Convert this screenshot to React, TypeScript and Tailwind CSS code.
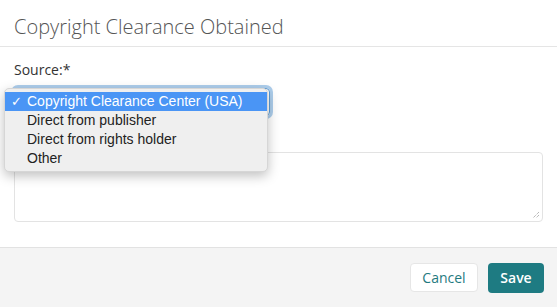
const options = [
  "Copyright Clearance Center (USA)",
  "Direct from publisher",
  "Direct from rights holder",
  "Other",
];

const App = () => {
  return (
    <div className="relative h-[307px] w-[557px] overflow-hidden bg-white font-['Open_Sans',sans-serif]">
      <div className="flex h-[47px] items-center border-b border-[#e5e5e5] px-[14px] pt-[7px]">
        <h1 className="text-[20px] font-light text-[#555]">
          Copyright Clearance Obtained
        </h1>
      </div>

      <div className="flex h-[200px] flex-col px-[14px] pt-[13px]">
        <label className="text-[14px] leading-[20px] text-[#333]">
          Source:*
        </label>
        <div className="mt-[8px] h-[28px] w-[256px] rounded-[4px] border border-[#5b9dd9] shadow-[0_0_0_3px_rgba(91,157,217,0.5)]"></div>
        <div className="h-[36px]"></div>
        <div className="relative h-[70px] w-[529px] rounded-[4px] border border-[#e3e3e3]">
          <svg
            className="absolute bottom-[2px] right-[2px]"
            width="8"
            height="8"
            viewBox="0 0 8 8"
          >
            <path d="M7 1 L1 7 M7 4 L4 7" stroke="#999" strokeWidth="1" strokeDasharray="1 1" />
          </svg>
        </div>
      </div>

      <div className="flex h-[60px] items-center justify-end gap-[10px] border-t border-[#e2e2e2] bg-[#f4f4f4] px-[13px]">
        <button className="h-[29px] w-[68px] rounded-[4px] border border-[#e6e6e6] bg-white text-[14px] text-[#1f7a80]">
          Cancel
        </button>
        <button className="h-[30px] w-[56px] rounded-[4px] bg-[#1e7b82] text-[14px] font-semibold text-white">
          Save
        </button>
      </div>

      <div className="absolute left-[4px] top-[88px] w-[264px] rounded-[5px] border border-[#d6d6d6] bg-[#efefef] py-[3px] font-['Liberation_Sans',Arial,sans-serif] text-[14px] text-[#222] shadow-[0_4px_12px_rgba(0,0,0,0.25)]">
        {options.map((option, index) => (
          <div
            key={index}
            className={
              index === 0
                ? "flex h-[19px] items-center bg-[#4a95f5] text-white"
                : "flex h-[19px] items-center"
            }
          >
            <span className="w-[22px] pl-[6px] text-[13px]">
              {index === 0 ? "✓" : ""}
            </span>
            <span>{option}</span>
          </div>
        ))}
      </div>
    </div>
  );
};

export default App;
